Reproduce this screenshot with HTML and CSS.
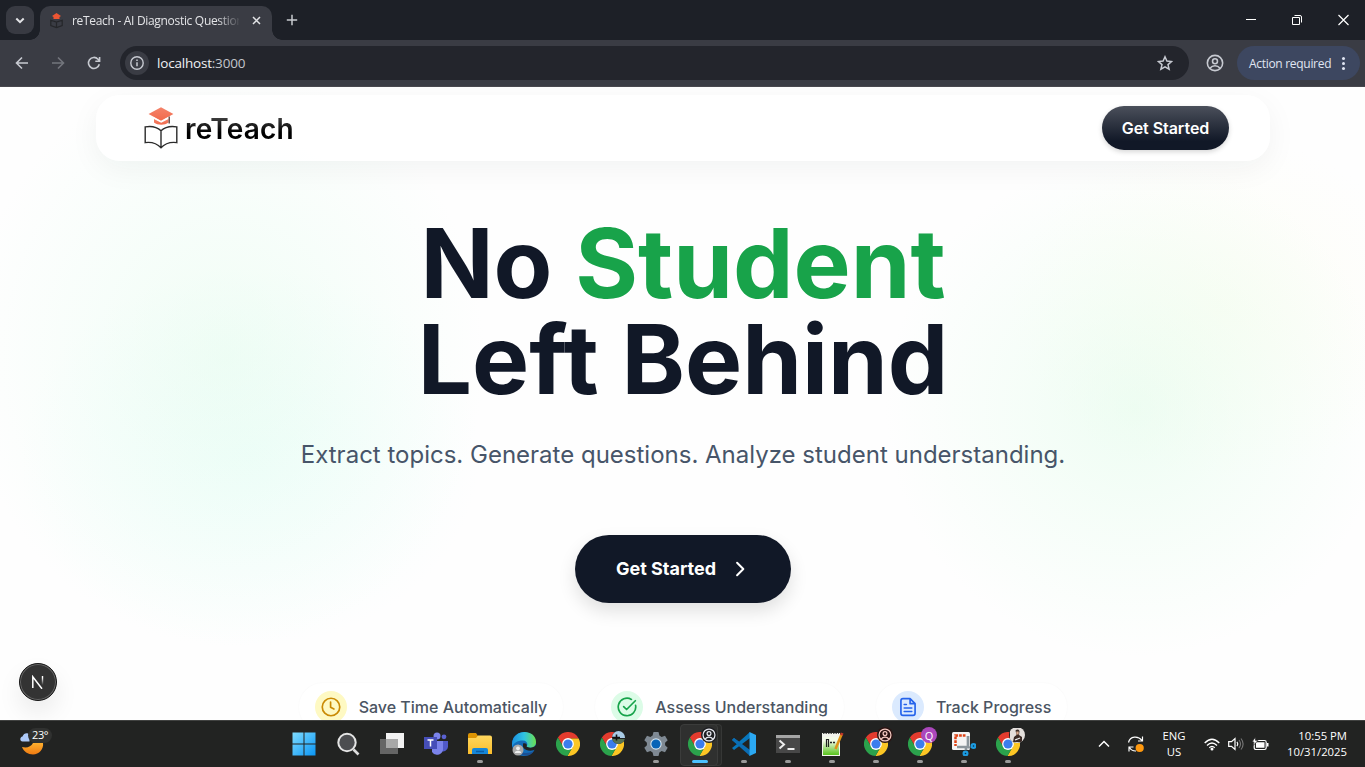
FILE: index.html
```html
<!DOCTYPE html>
<html lang="en">
<head>
<meta charset="utf-8">
<title>reTeach - AI Diagnostic Questions</title>
<link rel="stylesheet" href="styles.css">
</head>
<body>
<svg class="defs" width="0" height="0">
  <defs>
    <linearGradient id="win" x1="0" y1="0" x2="1" y2="1"><stop offset="0" stop-color="#7fdcff"/><stop offset="1" stop-color="#0a95f5"/></linearGradient>
    <linearGradient id="folder" x1="0" y1="0" x2="0" y2="1"><stop offset="0" stop-color="#ffd75e"/><stop offset="1" stop-color="#fbbd2c"/></linearGradient>
    <linearGradient id="moon" x1="0" y1="0" x2="0" y2="1"><stop offset="0" stop-color="#ffb02e"/><stop offset="1" stop-color="#ef7a12"/></linearGradient>
    <linearGradient id="edge" x1="0" y1="0" x2="1" y2="0"><stop offset="0" stop-color="#1b8fe0"/><stop offset=".5" stop-color="#2fc3e4"/><stop offset="1" stop-color="#6be04f"/></linearGradient>
    <linearGradient id="cap" x1="0" y1="0" x2="0" y2="1"><stop offset="0" stop-color="#f4836a"/><stop offset="1" stop-color="#f26a4c"/></linearGradient>
    <linearGradient id="pad" x1="0" y1="0" x2="0" y2="1"><stop offset="0.2" stop-color="#f4fbe8"/><stop offset="1" stop-color="#57c21c"/></linearGradient>
    <linearGradient id="enn" x1="0" y1="0" x2="0" y2="1"><stop offset="0.2" stop-color="#fff"/><stop offset="1" stop-color="#fff" stop-opacity="0"/></linearGradient>
  </defs>
  <symbol id="chrome" viewBox="0 0 24 24">
    <path fill="#e33b2e" d="M12 6.5H22.67A12 12 0 0 0 1.9 5.51L7.24 14.75z"/>
    <path fill="#fcc624" d="M22.67 6.5A12 12 0 0 1 11.43 23.99L16.76 14.75 12 6.5z"/>
    <path fill="#2ba24c" d="M11.43 23.99A12 12 0 0 1 1.9 5.51L7.24 14.75H16.76z"/>
    <circle cx="12" cy="12" r="5.900" fill="#fff"/><circle cx="12" cy="12" r="4.600" fill="#3b7ded"/>
  </symbol>
  <symbol id="person" viewBox="0 0 16 16">
    <g fill="none" stroke="currentColor" stroke-width="1.4"><circle cx="8" cy="8" r="6.8"/><circle cx="8" cy="6.4" r="2.2"/><path d="M3.500 12.600c2.400-2.800 6.600-2.800 9 0"/></g>
  </symbol>
  <symbol id="logo" viewBox="0 0 34 42">
    <path fill="url(#cap)" d="M10 12v3.500c4 3 10.500 3 14.500 0V12l-7.300 3.700z"/>
    <path fill="url(#cap)" d="M17 .2 29.400 7 17 13.800 4.600 7z"/>
    <path fill="none" stroke="#fff" stroke-width="1" d="M9 10.300 17 14.700l8-4.400"/>
    <path fill="none" stroke="#4b2a22" stroke-width="1.200" d="M25.200 9.500v7"/>
    <path class="logo-line" d="M17 23.800C13 20 6.500 18.900 1.200 19.900V35.600C7 34.900 13 36.400 17 40.800 21 36.400 27 34.900 32.800 35.600V19.900C27.500 18.900 21 20 17 23.800zV40.500"/>
  </symbol>
</svg>

<div class="screen">
  <header class="tabstrip">
    <button class="tab-search"><svg width="10" height="7" viewBox="0 0 10 7"><path class="ln" stroke-width="2" d="M1.300 1.500 5 5.200 8.700 1.500"/></svg></button>
    <div class="tab">
      <svg class="favicon" width="13" height="16" viewBox="0 0 13 16"><path fill="#ec5533" d="M6.500 0 11 3 9.500 4v2h-6V4L2 3z"/><path fill="none" stroke="#25262a" stroke-width="1.200" d="M.8 7.200 6.500 9l5.700-1.800v5.300L6.500 14.500.8 12.500zM6.500 9v5.500"/></svg>
      <span class="tab-title">reTeach - AI Diagnostic Questions</span>
      <svg class="tab-close" width="9" height="9" viewBox="0 0 9 9"><path class="ln" stroke-width="1.500" d="M1 1l7 7M8 1 1 8"/></svg>
    </div>
    <svg class="new-tab" width="12" height="12" viewBox="0 0 12 12"><path class="ln" stroke-width="1.500" d="M6 .8v10.400M.8 6h10.400"/></svg>
    <div class="win-controls">
      <svg width="10" height="12" viewBox="0 0 10 12"><path class="wl" d="M0 5.500h10"/></svg>
      <svg width="10" height="12" viewBox="0 0 10 12"><path class="wl" d="M.5 3.500h7v7h-7zM2.500 1.500h5.500q1.500 0 1.500 1.500v5.500"/></svg>
      <svg width="11" height="12" viewBox="0 0 11 12"><path class="wl" stroke-width="1.200" d="M.5 1l10 10M10.500 1l-10 10"/></svg>
    </div>
  </header>

  <div class="toolbar">
    <nav class="nav-buttons">
      <svg width="14" height="14" viewBox="0 0 14 14"><path class="ln" stroke-width="1.600" d="M13 7H1.800M7 1.500 1.500 7 7 12.500"/></svg>
      <svg class="dim" width="14" height="14" viewBox="0 0 14 14"><path class="ln" stroke-width="1.600" d="M1 7h11.200M7 1.500 12.500 7 7 12.500"/></svg>
      <svg width="14" height="14" viewBox="0 0 14 14"><path class="ln" stroke-width="1.600" d="M12.300 8.200A5.500 5.500 0 1 1 11 3.200L12.500 4.800M12.600 1v4.300H8.300"/></svg>
    </nav>
    <div class="omnibox">
      <span class="site-info"><svg width="14" height="14" viewBox="0 0 14 14"><circle class="ln" cx="7" cy="7" r="6.200" stroke-width="1.400"/><path class="ln" stroke-width="1.500" d="M7 6.200v4M7 3.500v1.400"/></svg></span>
      <span class="url">localhost<i>:3000</i></span>
      <svg class="star" width="16" height="16" viewBox="0 0 16 16"><path class="ln" stroke-width="1.500" d="M8 1.800 9.900 6.100l4.600.4-3.500 3.100 1.100 4.600L8 11.800l-4.100 2.400L5 9.600 1.500 6.500l4.600-.4z"/></svg>
    </div>
    <svg class="profile" width="18" height="18"><use href="#person"/></svg>
    <div class="action"><span>Action required</span><i></i></div>
  </div>

  <main class="page">
    <nav class="site-nav">
      <div class="brand"><svg width="34" height="42"><use href="#logo"/></svg><span>reTeach</span></div>
      <button class="nav-cta">Get Started</button>
    </nav>
    <section class="hero">
      <h1>No <em>Student</em><br>Left Behind</h1>
      <p>Extract topics. Generate questions. Analyze student understanding.</p>
      <button class="cta"><span>Get Started</span><svg width="20" height="20" viewBox="0 0 24 24"><path class="ln" stroke-width="2.400" stroke-linecap="round" stroke-linejoin="round" d="m8.500 4.500 7.500 7.500-7.500 7.500"/></svg></button>
    </section>
    <ul class="features">
      <li><span class="dot yellow"><svg width="20" height="20" viewBox="0 0 24 24"><circle class="ln" cx="12" cy="12" r="10.500"/><path class="ln" d="M11.500 6v6.300l4 2.200"/></svg></span>Save Time Automatically</li>
      <li><span class="dot green"><svg width="20" height="20" viewBox="0 0 24 24"><path class="ln" d="M22.300 10a10.500 10.500 0 1 1-5-7.100M8 11.500l3.500 3.500L22 4.500"/></svg></span>Assess Understanding</li>
      <li><span class="dot blue"><svg width="20" height="20" viewBox="0 0 24 24"><path class="ln" d="M14.500 2H6a2.500 2.500 0 0 0-2.500 2.500v15A2.500 2.500 0 0 0 6 22h12a2.500 2.500 0 0 0 2.500-2.500V8zv6h6M7.500 9h2.500M7.500 13.200h9M7.500 17.400h9"/></svg></span>Track Progress</li>
    </ul>
    <div class="dev-badge"><svg width="14" height="14" viewBox="0 0 14 14"><path fill="none" stroke="#fff" stroke-width="1.500" d="M1.800 13V1.800l9.200 12"/><path fill="url(#enn)" d="M10.800 1h1.400v9h-1.400z"/></svg></div>
  </main>

  <footer class="taskbar">
    <div class="weather"><svg width="24" height="24" viewBox="0 0 24 24"><path fill="#adc9f8" d="M2.500 10.500c-3.300-.7-2.500-4.500 0-5 1-3.500 5.500-4.500 7-1.500v6.500z"/><path fill="url(#moon)" d="M2 16c5 1.400 9-.3 11-4h10c1 6-4 11.500-10 11.500C8 23.500 3.500 20.500 2 16z"/></svg><b>23°</b></div>
    <div class="apps">
      <div class="app"><svg width="24" height="24" viewBox="0 0 24 24"><path fill="url(#win)" d="M.5.5h11v11H.5zM12.500.5h11v11h-11zM.5 12.500h11v11H.5zM12.500 12.500h11v11h-11z"/></svg></div>
      <div class="app"><svg width="24" height="24" viewBox="0 0 24 24"><path d="M17.500 17.500 22.500 22.500" stroke="#ddd" stroke-width="2.600"/><circle cx="11" cy="10.500" r="8.700" fill="#4c4d50" stroke="#e4e4e4" stroke-width="2"/></svg></div>
      <div class="app"><svg width="24" height="24" viewBox="0 0 24 24"><path fill="#f2f2f2" d="M6 1h18v15H6z"/><path fill="#656565" d="M0 7h18v15H0z"/><path fill="#a8a8a8" d="M6 7h12v9H6z"/></svg></div>
      <div class="app"><svg width="24" height="24" viewBox="0 0 24 24"><circle cx="20" cy="4.800" r="2.400" fill="#5b62d3"/><path fill="#5059c9" d="M16 9h8v6a5 5 0 0 1-7 4z"/><circle cx="13" cy="4" r="3.500" fill="#7b83eb"/><path fill="#7b83eb" d="M8 9h11v7a6 6 0 0 1-11 4z"/><path fill="#464eb8" d="M0 5h13v12H0z"/><path stroke="#fff" stroke-width="1.500" d="M3.500 8h6M6.500 8v6.500"/></svg></div>
      <div class="app run"><svg width="24" height="24" viewBox="0 0 24 24"><path fill="#dd9403" d="M0 3q0-2 2-2h6l2 3v4H0z"/><path fill="url(#folder)" d="M0 6h8l2-2.500h12q2 0 2 2V22H0z"/><path fill="#1687d9" d="M4 22v-4q0-2 2-2h12q2 0 2 2v4z"/><path stroke="#0b5da5" stroke-width="1.500" d="M8 19.500h8"/></svg></div>
      <div class="app"><svg width="24" height="24" viewBox="0 0 24 24"><circle cx="12" cy="12" r="12" fill="#136cb9"/><path fill="url(#edge)" d="M0 12C1-4 24-3 24 10c0 6-7 7-9.500 4.500 2-2 .5-6-3.500-6C5 8.500 1 11 0 16z"/><path fill="#1b4f92" d="M8 12c-3 8 5 11.500 14 7-3.500 5.500-11 6-15 1.500-2-3-1.500-7 1-8.500z"/><path fill="#222" d="M11 11.500c3-1 4.500 1 3.500 3 2.500 2 7.500 1.300 9.500-1.500l.5 4c-4 3-12 2-13.500-2z"/><circle cx="6" cy="18" r="5.500" fill="#aaa"/><circle cx="6" cy="16.300" r="1.900" fill="#eee"/><path fill="#eee" d="M2.800 21c0-3 6.400-3 6.400 0z"/></svg></div>
      <div class="app"><svg width="24" height="24"><use href="#chrome"/></svg></div>
      <div class="app"><svg width="24" height="24"><use href="#chrome"/></svg><span class="mini scenic"><svg width="13" height="13" viewBox="0 0 13 13"><path fill="#a9cbe6" d="M0 0h13v7H0z"/><path fill="#567254" d="M0 8h13v5H0z"/><path stroke="#111" stroke-width="1.600" d="M0 6.500h8M4.500 3.500v6"/></svg></span></div>
      <div class="app run"><svg width="24" height="24" viewBox="0 0 24 24"><path fill="#7f8993" d="M9.500 0h5l.9 3.600 2.200 1.300L21 3.800l2.700 4.400-2.600 2.500v2.600l2.600 2.500-2.700 4.400-3.400-1.100-2.200 1.300-.9 3.600h-5l-.9-3.600-2.200-1.300L3 20.200.3 15.800l2.600-2.500v-2.600L.3 8.200 3 3.800l3.400 1.100 2.200-1.300z"/><circle cx="12" cy="12" r="5.700" fill="#d4e4ef"/><circle cx="12" cy="12" r="4.600" fill="#0864b7"/></svg></div>
      <div class="app run active"><svg width="24" height="24"><use href="#chrome"/></svg><span class="mini"><svg width="14" height="14"><use href="#person"/></svg></span></div>
      <div class="app run"><svg width="24" height="24" viewBox="0 0 24 24"><path fill="#0877bd" d="M0 8l2-2 5 3.800L18 0v6L2 18l-2-2 5-4z"/><path fill="#0b6db4" d="M0 8l2-2 16 12v6L0 8z"/><path fill="#2ba8f2" d="M17.500 0 24 3v18l-6.500 3z"/></svg></div>
      <div class="app run"><svg width="24" height="24" viewBox="0 0 24 24"><path fill="#474747" d="M0 3h24v18H0z"/><path fill="#a5a5a5" d="M0 3h24v3H0z"/><path fill="none" stroke="#eee" stroke-width="2" d="M3.500 8.500 8 12.500l-4.500 4M11.500 17h7"/></svg></div>
      <div class="app run"><svg width="24" height="24" viewBox="0 0 24 24"><path fill="#f3f4ed" d="M2 1h18v23H2z"/><path fill="url(#pad)" d="M3 5h16v18H3z"/><path stroke="#555" stroke-dasharray="1.500 1" d="M3 1.500h16"/><path fill="none" stroke="#222" stroke-width="1.200" d="M6.500 15V7.500h2V15"/><path stroke="#222" stroke-width="1.300" stroke-dasharray="2 1" d="M10 10.500h6"/><path stroke="#df9418" stroke-width="2.600" d="M21.500 2.500 15.500 17"/><path stroke="#c3392b" stroke-width="2.800" d="M22.200 1 21.300 3.200"/></svg></div>
      <div class="app run"><svg width="24" height="24"><use href="#chrome"/></svg><span class="mini rose"><svg width="14" height="14"><use href="#person"/></svg></span></div>
      <div class="app run"><svg width="24" height="24"><use href="#chrome"/></svg><span class="mini purple">Q</span></div>
      <div class="app run"><svg width="24" height="24" viewBox="0 0 24 24"><rect width="18" height="18" rx="1.500" fill="#f4f4f4"/><path fill="none" stroke="#dd4215" stroke-width="2.500" stroke-dasharray="2.700 1" d="M13.500 3.500H3.500v10.500"/><path fill="none" stroke="#8c969c" stroke-width="2.700" d="M16 4v11H5M15 14l3 2M14 15v3"/><g fill="#082d48" stroke="#1c9be0" stroke-width="2.200"><circle cx="21.500" cy="14" r="1.900"/><circle cx="13.500" cy="21.500" r="1.900"/></g></svg></div>
      <div class="app run"><svg width="24" height="24"><use href="#chrome"/></svg><span class="mini photo"><svg width="15" height="15" viewBox="0 0 15 15"><path fill="#e3dedb" d="M0 0h15v15H0z"/><path fill="#3a2a25" d="M5.500 2.500q2.500-2 4 .5l-.5 4 3 2v5H3l1-5 2.500-2z"/><path fill="#d7a98c" d="M6.300 3.500h2.400v3H6.300z"/><path stroke="#eee" stroke-width="1.300" d="M5 12l5-2"/></svg></span></div>
    </div>
    <div class="tray">
      <svg class="chev" width="12" height="8" viewBox="0 0 12 8"><path class="ln" stroke-width="1.500" d="M1 6.500l5-5 5 5"/></svg>
      <svg class="sync" width="18" height="18" viewBox="0 0 18 18"><path class="ln" stroke-width="1.200" d="M1.500 7.500C3 1 11 .5 15 5.500M15.500 1.500v4.500H11M2 16.500V12h4.500M2.500 12.500C4 15 6 16.200 9 16"/><circle cx="12.700" cy="13" r="4.100" fill="#ff990f"/></svg>
      <div class="lang">ENG<br>US</div>
      <svg class="wifi" width="16" height="13" viewBox="0 0 16 13"><path class="ln" stroke-width="1.300" d="M.7 5q7.300-7.500 14.600 0M3 7.500q5-5 10 0M5.300 9.700q2.700-2.700 5.400 0"/><circle cx="8" cy="11" r="1.500" fill="#fff"/></svg>
      <svg class="vol" width="16" height="14" viewBox="0 0 16 14"><path class="ln" stroke-width="1.200" d="M.7 4.700h2.800L7 1.500v11L3.500 9.300H.7zM9 4.800q1.600 2.200 0 4.400"/><path fill="none" stroke="#777" stroke-width="1.100" d="M11 3q3 4 0 8M13 1.500q4.200 5.500 0 11"/></svg>
      <svg class="batt" width="17" height="14" viewBox="0 0 17 14"><rect class="ln" x="2.200" y="3.500" width="12" height="9" rx="1.700" stroke-width="1.200"/><path fill="#fff" d="M4 5.300h8.500v5.400H4zM15 6h1.500v3.500H15z"/><path fill="#fff" stroke="#222" stroke-width=".7" d="M3.500 0 0 5h2l-.8 3.500L6 3.500H3.500z"/></svg>
      <div class="clock">10:55 PM<br>10/31/2025</div>
    </div>
  </footer>
</div>
</body>
</html>
```
FILE: styles.css
```css
* { box-sizing: border-box; }
body { margin: 0; overflow: hidden; font-family: Inter, "Liberation Sans", sans-serif; }
button { border: 0; padding: 0; font: inherit; color: inherit; }
svg { display: block; flex: none; }
.defs { position: absolute; }
.ln { fill: none; stroke: currentColor; }
.wl { fill: none; stroke: #fff; }
.logo-line { fill: none; stroke: #2b2b2b; stroke-width: 1.4; }
.screen { width: 1365px; height: 767px; display: flex; flex-direction: column; overflow: hidden; }

/* browser frame */
.tabstrip { height: 40px; flex: none; display: flex; align-items: center; background: #1d2027; color: #e2e3e6; padding-left: 6px; font-family: "Open Sans", sans-serif; }
.tab-search { width: 28px; height: 28px; border-radius: 9px; background: #383a42; display: grid; place-items: center; margin-right: 6px; }
.tab { width: 232px; height: 34px; margin-top: 6px; padding: 0 11px 5px 10px; border-radius: 10px 10px 0 0; background: #3a3c44; display: flex; align-items: center; position: relative; }
.tab::before, .tab::after { content: ""; position: absolute; bottom: 0; width: 10px; height: 10px; }
.tab::before { left: -10px; background: radial-gradient(circle at 0 0, transparent 9.5px, #3a3c44 10px); }
.tab::after { right: -10px; background: radial-gradient(circle at 100% 0, transparent 9.5px, #3a3c44 10px); }
.favicon { margin-right: 9px; }
.tab-title { width: 167px; font-size: 12px; letter-spacing: -.31px; white-space: nowrap; overflow: hidden; mask-image: linear-gradient(to right, #000 145px, transparent 169px); }
.tab-close { margin-left: auto; }
.new-tab { margin-left: 14px; color: #c8cad0; }
.win-controls { margin-left: auto; display: flex; gap: 36px; padding-right: 16px; }
.toolbar { height: 47px; flex: none; display: flex; align-items: center; background: #3a3c44; color: #c7cad1; border-bottom: 1px solid #48484e; font-family: "Open Sans", sans-serif; }
.nav-buttons { display: flex; gap: 22px; padding: 0 19px 0 15px; }
.dim { opacity: .4; }
.omnibox { width: 1069px; height: 34px; border-radius: 17px; background: #23252c; display: flex; align-items: center; padding: 0 16px 0 5px; }
.site-info { width: 24px; height: 24px; border-radius: 50%; background: #3a3c44; display: grid; place-items: center; }
.url { margin-left: 8px; font-size: 13.5px; letter-spacing: -.2px; color: #f0f1f4; }
.url i { font-style: normal; color: #c2c5cc; }
.star { margin-left: auto; }
.profile { margin-left: 17px; }
.action { width: 123px; height: 34px; margin-left: 13px; border-radius: 17px; background: #3d4760; color: #e0e5f2; display: flex; align-items: center; justify-content: space-between; padding: 0 15px 0 12px; font-size: 12px; letter-spacing: -.3px; white-space: nowrap; }
.action i { width: 3px; height: 3px; border-radius: 50%; background: #e0e5f2; box-shadow: 0 -5px #e0e5f2, 0 5px #e0e5f2; }

/* landing page */
.page { height: 633px; flex: none; overflow: hidden; position: relative; padding-top: 8px; background:
  radial-gradient(ellipse 260px 290px at 225px 270px, rgba(222,252,232,.42), rgba(226,253,238,.25) 50%, rgba(240,253,248,0) 100%),
  radial-gradient(ellipse 230px 190px at 250px 370px, rgba(222,253,248,.38), rgba(240,253,250,0)),
  radial-gradient(ellipse 250px 250px at 1135px 320px, rgba(222,252,232,.5), rgba(228,253,236,.32) 45%, rgba(247,254,249,0) 100%),
  radial-gradient(ellipse 210px 170px at 1220px 220px, rgba(250,252,232,.4), rgba(255,255,245,0)),
  #fefefe; }
.site-nav { width: 1174px; height: 66px; margin: 0 0 0 96px; padding: 0 41px 0 48px; border-radius: 24px; background: rgba(255,255,255,.82); box-shadow: 0 8px 30px rgba(20,30,30,.05); display: flex; align-items: center; justify-content: space-between; }
.brand { display: flex; align-items: center; gap: 7px; }
.brand span { margin-top: 1px; font-size: 28px; font-weight: 600; line-height: 36px; letter-spacing: .2px; color: transparent; background: linear-gradient(#444 15%, #000 60%); background-clip: text; }
.nav-cta { width: 127px; height: 44px; border-radius: 22px; background: linear-gradient(#4b505b, #111827 80%); color: #fff; font-size: 16px; font-weight: 600; letter-spacing: -.05px; box-shadow: 0 2px 5px rgba(0,0,0,.16); }
.hero { display: flex; flex-direction: column; align-items: center; padding: 54px 0 0 1px; }
h1 { margin: 0; font-size: 96px; line-height: 96px; font-weight: 700; letter-spacing: 0; color: #111827; text-align: center; }
h1 em { font-style: normal; color: #18a34a; }
.hero p { margin: 28px 0 61px; font-size: 24px; line-height: 39px; color: #475569; white-space: nowrap; }
.cta { width: 216px; height: 68px; border-radius: 34px; background: #111827; color: #fff; display: flex; align-items: center; justify-content: center; gap: 14px; font-size: 18px; font-weight: 700; box-shadow: 0 8px 18px rgba(0,0,0,.12); }
.cta span { padding-bottom: 1px; }
.features { list-style: none; margin: 80px 0 0; padding: 0 0 0 1px; display: flex; justify-content: center; gap: 32px; font-size: 16px; font-weight: 500; color: #4b5563; }
.features li { height: 48px; padding: 0 16px; border-radius: 24px; display: flex; align-items: center; gap: 12px; background: rgba(255,255,255,.6); box-shadow: 0 0 2px rgba(0,0,0,.04); }
.dot { width: 32px; height: 32px; border-radius: 50%; display: grid; place-items: center; }
.dot path, .dot circle { stroke-width: 2; stroke-linecap: round; stroke-linejoin: round; }
.yellow { background: #fef9c3; color: #ca8a04; }
.green { background: #dcfce7; color: #16a34a; }
.blue { background: #dbeafe; color: #2563eb; }
.dev-badge { position: absolute; left: 19px; bottom: 19px; width: 38px; height: 38px; border-radius: 50%; background: #333; border: 1px solid #171717; display: grid; place-items: center; box-shadow: inset 0 0 0 1px #666, 0 12px 24px rgba(0,0,0,.08); }

/* taskbar */
.taskbar { height: 47px; flex: none; background: #222322; border-top: 1px solid #414241; display: flex; color: #fff; font-family: "Open Sans", sans-serif; }
.weather { width: 282px; padding: 10px 0 0 20px; position: relative; }
.weather b { position: absolute; left: 28px; top: 7px; width: 24px; height: 15px; border-radius: 8px; background: #303130; font-size: 11px; line-height: 14px; font-weight: 400; text-align: center; letter-spacing: -.5px; }
.apps { display: flex; }
.app { width: 44px; height: 46px; display: grid; place-items: center; position: relative; }
.run::after { content: ""; position: absolute; left: 19px; top: 39px; width: 6px; height: 3px; border-radius: 2px; background: #9a9a9a; }
.active::before { content: ""; position: absolute; left: 2px; top: 3px; width: 36px; height: 40px; border-radius: 4px; background: #2f302f; border: 1px solid #3b3c3b; box-shadow: 4px 0 0 -1px #292a29, 4px 0 #363736; }
.active > svg { position: relative; }
.active::after { left: 14px; width: 16px; background: #4cc2ff; }
.mini { position: absolute; left: 23px; top: 6px; width: 16px; height: 16px; border-radius: 50%; background: #202124; color: #e6e8ef; display: grid; place-items: center; font: 11px "Open Sans", sans-serif; overflow: hidden; }
.scenic { left: 22px; top: 10px; width: 13px; height: 13px; }
.rose { background: #2c1514; color: #f5c9c1; }
.purple { background: #ab47bc; color: #fff; }
.tray { margin-left: auto; display: flex; align-items: center; padding-right: 18px; font-size: 11.3px; line-height: 16px; }
.sync { margin-left: 17px; }
.lang { margin-left: 17px; width: 24px; text-align: center; }
.wifi { margin-left: 18px; }
.vol { margin-left: 8px; }
.batt { margin-left: 8px; }
.clock { width: 62px; margin-left: 16px; text-align: right; white-space: nowrap; display: flow-root; }
```
